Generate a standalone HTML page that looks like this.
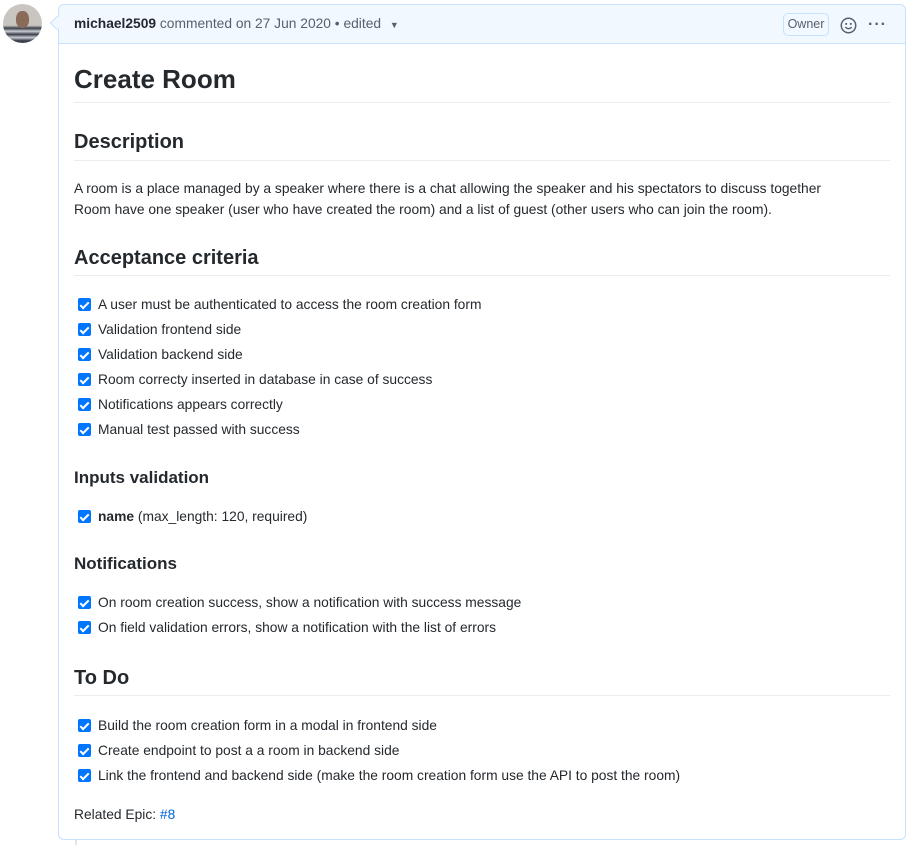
<!DOCTYPE html>
<html><head><meta charset="utf-8"><style>
*{margin:0;padding:0;box-sizing:border-box}
body{width:911px;height:845px;background:#fff;font-family:"Liberation Sans",sans-serif;color:#24292e;position:relative;overflow:hidden}
.a{position:absolute;white-space:nowrap}
.t{font-size:13.8px;line-height:18px}
.box{position:absolute;left:58px;top:4px;width:848px;height:836px;border:1px solid #c8e1ff;border-radius:6px}
.hdr{position:absolute;left:0;top:0;right:0;height:39px;background:#f1f8ff;border-bottom:1px solid #c8e1ff;border-radius:6px 6px 0 0}
.hr{position:absolute;left:74px;width:816px;height:1px;background:#eaecef}
.cb{position:absolute;left:78px;width:13px;height:13px;background:#0075ff;border-radius:2px}
.cb:after{content:"";position:absolute;left:4px;top:1.5px;width:3px;height:7px;border:solid #fff;border-width:0 2px 2px 0;transform:rotate(45deg)}
</style></head><body>
<div style="position:absolute;left:3px;top:4px;width:39px;height:39px;border-radius:50%;background:linear-gradient(#c9c6c1 0,#c9c6c1 55%,#3a3f4a 62%,#c9ccd2 70%,#3a3f4a 78%,#c9ccd2 86%,#3a3f4a 94%);overflow:hidden"><div style="position:absolute;left:13px;top:7px;width:13px;height:17px;border-radius:45%;background:#8a6a58"></div></div>
<div style="position:absolute;left:75px;top:840px;width:2px;height:5px;background:#e1e4e8"></div>
<div class="box"><div class="hdr"></div></div>
<div style="position:absolute;left:52px;top:18px;width:10px;height:10px;background:#f1f8ff;border-left:1px solid #c8e1ff;border-bottom:1px solid #c8e1ff;transform:rotate(45deg)"></div>
<div class="a t" style="left:74px;top:15px;color:#586069"><b style="color:#24292e">michael2509</b> commented on 27 Jun 2020 • edited <span style="font-size:9px;margin-left:5px">▼</span></div>
<div class="a" style="left:783px;top:13px;width:46px;height:23px;border:1px solid #c8e1ff;border-radius:5px;font-size:12.5px;line-height:21px;text-align:center;color:#586069">Owner</div>
<svg class="a" style="left:840px;top:17px" width="17" height="17" viewBox="0 0 16 16"><circle cx="8" cy="8" r="6.8" fill="none" stroke="#586069" stroke-width="1.4"/><circle cx="5.8" cy="6.5" r="1" fill="#586069"/><circle cx="10.2" cy="6.5" r="1" fill="#586069"/><path d="M5 9.5q3 3 6 0" fill="none" stroke="#586069" stroke-width="1.3"/></svg>
<div class="a" style="left:868px;top:16px;font-size:16px;color:#586069;letter-spacing:1px;font-weight:bold">···</div>

<div class="a" style="left:74px;top:63px;font-size:26px;line-height:32px;font-weight:600">Create Room</div>
<div class="hr" style="top:102px"></div>
<div class="a" style="left:74px;top:130px;font-size:20px;line-height:24px;font-weight:600">Description</div>
<div class="hr" style="top:160px"></div>
<div class="a t" style="left:74px;top:180px">A room is a place managed by a speaker where there is a chat allowing the speaker and his spectators to discuss together</div>
<div class="a t" style="left:74px;top:201px">Room have one speaker (user who have created the room) and a list of guest (other users who can join the room).</div>
<div class="a" style="left:74px;top:246px;font-size:20px;line-height:24px;font-weight:600">Acceptance criteria</div>
<div class="hr" style="top:275px"></div>

<div class="cb" style="top:298px"></div><div class="a t" style="left:98px;top:296px">A user must be authenticated to access the room creation form</div>
<div class="cb" style="top:323px"></div><div class="a t" style="left:98px;top:321px">Validation frontend side</div>
<div class="cb" style="top:348px"></div><div class="a t" style="left:98px;top:346px">Validation backend side</div>
<div class="cb" style="top:373px"></div><div class="a t" style="left:98px;top:371px">Room correcty inserted in database in case of success</div>
<div class="cb" style="top:398px"></div><div class="a t" style="left:98px;top:396px">Notifications appears correctly</div>
<div class="cb" style="top:423px"></div><div class="a t" style="left:98px;top:421px">Manual test passed with success</div>

<div class="a" style="left:74px;top:468px;font-size:17px;line-height:20px;font-weight:600">Inputs validation</div>
<div class="cb" style="top:510px"></div><div class="a t" style="left:98px;top:508px"><b>name</b> (max_length: 120, required)</div>

<div class="a" style="left:74px;top:554px;font-size:17px;line-height:20px;font-weight:600">Notifications</div>
<div class="cb" style="top:596px"></div><div class="a t" style="left:98px;top:594px">On room creation success, show a notification with success message</div>
<div class="cb" style="top:621px"></div><div class="a t" style="left:98px;top:619px">On field validation errors, show a notification with the list of errors</div>

<div class="a" style="left:74px;top:666px;font-size:20px;line-height:24px;font-weight:600">To Do</div>
<div class="hr" style="top:695px"></div>
<div class="cb" style="top:719px"></div><div class="a t" style="left:98px;top:717px">Build the room creation form in a modal in frontend side</div>
<div class="cb" style="top:744px"></div><div class="a t" style="left:98px;top:742px">Create endpoint to post a a room in backend side</div>
<div class="cb" style="top:769px"></div><div class="a t" style="left:98px;top:767px">Link the frontend and backend side (make the room creation form use the API to post the room)</div>

<div class="a t" style="left:74px;top:806px">Related Epic: <span style="color:#0366d6">#8</span></div>
</body></html>
